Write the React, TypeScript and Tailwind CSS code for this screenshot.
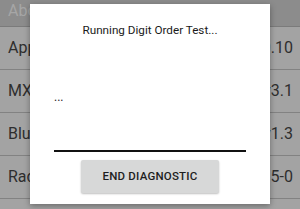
import React from 'react';

const rows = [
    { label: 'App Version', value: '1.0.10' },
    { label: 'MXChip Firmware', value: 'v3.1' },
    { label: 'Bluetooth Stack', value: 'v1.3' },
    { label: 'Radio Module', value: '2.1.5-0' },
];

export default function App() {
    return (
        <div className="relative w-[300px] h-[209px] overflow-hidden bg-[#a3a3a3] font-['Roboto',sans-serif]">
            {/* dimmed list behind dialog */}
            <div className="h-[27px] bg-[#8c8c8c] border-b border-[#7b7b7b] px-2 flex items-center pb-[5px]">
                <span className="text-[16px] text-[#a6a6a6]">About</span>
            </div>
            {rows.map(r => (
                <div key={r.label} className="h-[43px] border-b border-[#828282] pl-2 pr-[7px] flex items-center justify-between text-[16px] text-[#2e2e2e]">
                    <span>{r.label}</span>
                    <span>{r.value}</span>
                </div>
            ))}

            {/* dialog */}
            <div className="absolute left-[30px] top-[4px] w-[240px] h-[200px] bg-white shadow-[0_2px_6px_rgba(0,0,0,0.35)] flex flex-col">
                <div className="pt-[14px] text-center text-[11.7px] text-[#1a1a1a] leading-[24px]">Running Digit Order Test...</div>
                <div className="px-[24px] pt-[47px] text-[12px] text-[#222] leading-[16px]">...</div>
                <div className="mx-[24px] mt-[45px] h-[2px] bg-[#111]" />
                <div className="flex justify-center mt-[8px]">
                    <button className="w-[138px] h-[33px] rounded-[2px] bg-[#d7d8d8] shadow-[0_1px_2px_rgba(0,0,0,0.25)] text-[11.5px] font-medium text-[#1e1e1e] tracking-[0.2px]">
                        END DIAGNOSTIC
                    </button>
                </div>
            </div>
        </div>
    );
}
